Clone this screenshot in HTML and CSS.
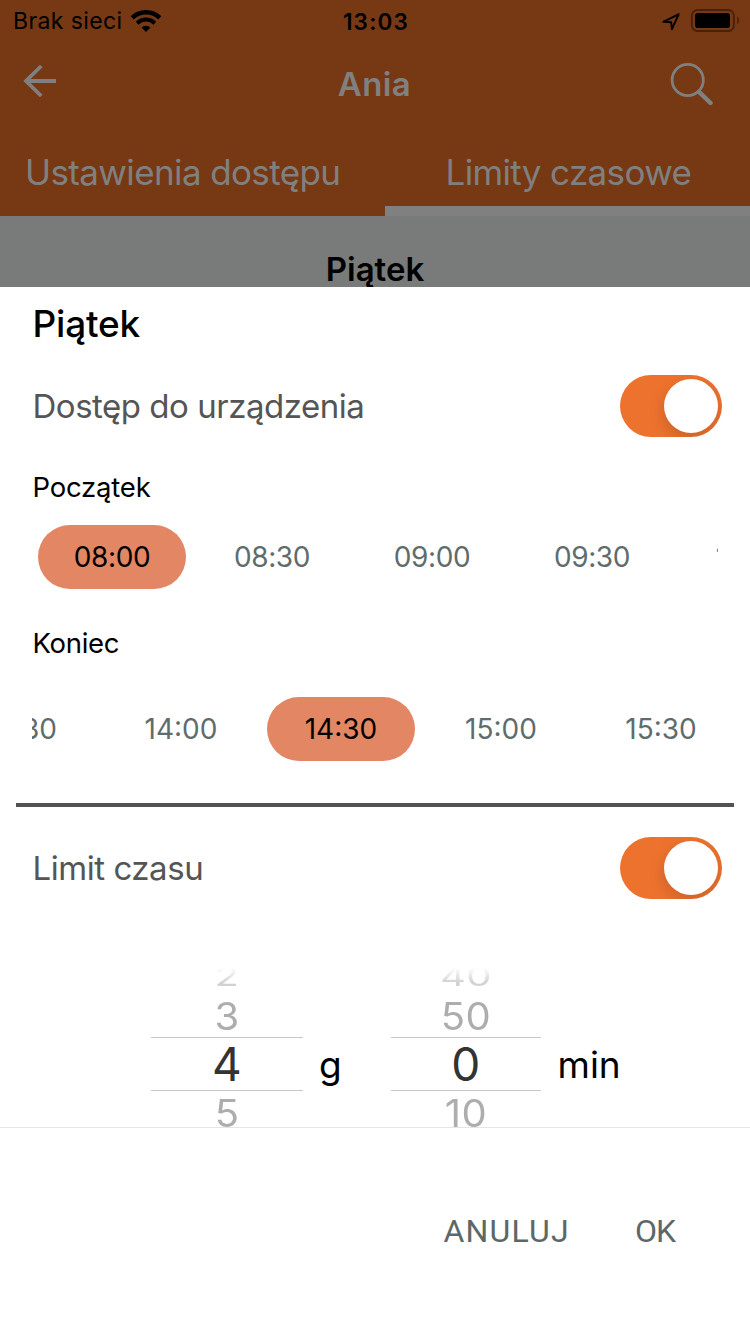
FILE: index.html
```html
<!DOCTYPE html>
<html lang="pl">
<head>
<meta charset="utf-8">
<title>Ania – Limity czasowe</title>
<link rel="stylesheet" href="styles.css">
</head>
<body>
<div class="screen">
  <header class="header">
    <div class="status">
      <div class="carrier"><span>Brak sieci</span>
        <svg class="wifi" width="32" height="24" viewBox="0 0 32 24"><g fill="none" stroke="#000"><path d="M2.2 8.9A19.7 19.7 0 0 1 29.8 8.9" stroke-width="4.6"/><path d="M7.2 14.2A12.6 12.6 0 0 1 24.8 14.2" stroke-width="4"/></g><path d="M16 23L11.6 18.6A6.3 6.3 0 0 1 20.4 18.6Z"/></svg>
      </div>
      <div class="clock">13:03</div>
      <div class="indicators">
        <svg width="80" height="41" viewBox="0 0 80 41"><path d="M3.4 20.8L18.8 13.2L11.9 28.2L11.2 21.2Z" fill="none" stroke="#000" stroke-width="1.9" stroke-linejoin="round"/><rect x="31.9" y="9" width="42" height="21" rx="5.6" fill="none" stroke="#47210c" stroke-width="1.9"/><rect x="35" y="12" width="35" height="15" rx="2.8"/><path d="M77.2 15.6Q79 16.4 79 19.4T77.2 23.2Z" fill="#47210c"/></svg>
      </div>
    </div>
    <div class="nav">
      <svg class="back" width="34" height="34" viewBox="0 0 34 34"><path d="M33 17H3M18.3 2L3 17L18.3 32" fill="none" stroke="#808080" stroke-width="3.8"/></svg>
      <h1 class="name">Ania</h1>
      <svg class="search" width="44" height="44" viewBox="0 0 44 44"><circle cx="17.7" cy="18" r="15.6" fill="none" stroke="#808080" stroke-width="2.8"/><path d="M29 29.8L40.5 41" stroke="#808080" stroke-width="4.4" stroke-linecap="round"/></svg>
    </div>
    <nav class="tabs">
      <div class="tab">Ustawienia dostępu</div>
      <div class="tab active">Limity czasowe</div>
    </nav>
  </header>
  <div class="backdrop"><h2 class="day">Piątek</h2></div>
  <main class="dialog">
    <h2 class="title">Piątek</h2>
    <div class="row"><span>Dostęp do urządzenia</span><span class="toggle"><i class="knob"></i></span></div>
    <h3 class="label">Początek</h3>
    <div class="times start">
      <span class="time selected">08:00</span><span class="time">08:30</span><span class="time">09:00</span><span class="time">09:30</span><span class="time one">10:00</span>
    </div>
    <h3 class="label end-label">Koniec</h3>
    <div class="times end">
      <span class="time one">13:30</span><span class="time one">14:00</span><span class="time one selected">14:30</span><span class="time one">15:00</span><span class="time one">15:30</span>
    </div>
    <hr class="rule">
    <div class="row limit"><span>Limit czasu</span><span class="toggle"><i class="knob"></i></span></div>
    <div class="picker">
      <div class="wheel hours"><div class="far">2</div><div class="near">3</div><div class="current">4</div><div class="near">5</div></div>
      <span class="unit">g</span>
      <div class="wheel minutes"><div class="far">40</div><div class="near">50</div><div class="current">0</div><div class="near">10</div></div>
      <span class="unit">min</span>
    </div>
    <footer class="actions"><span class="action">ANULUJ</span><span class="action ok">OK</span></footer>
  </main>
</div>
</body>
</html>
```
FILE: styles.css
```css
* { box-sizing: border-box; }
body { margin: 0; font-family: Inter, "Liberation Sans", sans-serif; background: #fff; }
h1, h2, h3 { margin: 0; }
.screen { width: 750px; height: 1334px; overflow: hidden; display: flex; flex-direction: column; }

.header { height: 216px; background: #773814; color: #808080; flex: none; }
.status { height: 41px; display: grid; grid-template-columns: 1fr auto 1fr; align-items: center; color: #000; line-height: 41px; }
.carrier { display: flex; align-items: center; padding-left: 13px; font-size: 23px; letter-spacing: .4px; line-height: 43px; }
.wifi { margin: -2px 0 0 7px; }
.clock { font-size: 22.5px; font-weight: 600; letter-spacing: 1.2px; padding-left: 2px; }
.indicators { display: flex; justify-content: flex-end; padding-right: 10px; }
.nav { height: 87px; display: grid; grid-template-columns: 1fr auto 1fr; align-items: center; padding: 0 36px 0 23px; }
.back { margin-top: -7px; }
.name { font-size: 33px; font-weight: 600; letter-spacing: .39px; line-height: 87px; margin-left: 12px; }
.search { justify-self: end; margin-top: -2px; }
.tabs { height: 88px; display: flex; font-size: 35px; line-height: 89px; }
.tab { width: 385px; padding-left: 25px; letter-spacing: -.62px; white-space: nowrap; }
.tab.active { width: 365px; padding-left: 60.5px; letter-spacing: -.64px; border-bottom: 10px solid #808080; }

.backdrop { height: 71px; flex: none; background: #797b7a; text-align: center; overflow: hidden; }
.day { font-size: 33px; font-weight: 600; line-height: 106px; }

.dialog { flex: 1; background: #fff; color: #000; }
.title { height: 74px; line-height: 74px; padding-left: 32.5px; font-size: 37px; font-weight: 500; letter-spacing: -.2px; }
.row { height: 90px; display: flex; align-items: center; justify-content: space-between; padding: 0 28px 0 32.5px; font-size: 33px; letter-spacing: -.48px; color: #555; }
.row.limit { height: 122px; letter-spacing: -.45px; }
.toggle { width: 102px; height: 62px; border-radius: 31px; background: #ed722e; display: flex; justify-content: flex-end; padding: 4px; overflow: hidden; }
.knob { width: 54px; height: 54px; border-radius: 50%; background: #fff; box-shadow: 0 6px 16px rgba(0, 0, 0, .15); }
.label { height: 72px; line-height: 72px; padding-left: 32.5px; font-size: 27.5px; font-weight: 400; letter-spacing: -.2px; }
.end-label { height: 104px; line-height: 104px; letter-spacing: -.3px; }
.times { height: 68px; margin: 0 32px; display: flex; align-items: center; gap: 12px; overflow: hidden; }
.times.start { padding-left: 6px; }
.times.end .time:first-child { margin-left: -85px; }
.time { flex: none; width: 148px; height: 64px; border-radius: 32px; line-height: 65px; text-align: center; font-size: 28px; letter-spacing: -.4px; color: #5f6c6c; }
.time.one { letter-spacing: 0; }
.time.selected { background: #e28663; color: #000; }
.rule { margin: 40px 16px 0; height: 4px; border: 0; background: #525452; }

.picker { height: 199px; border-bottom: 1px solid #e5e5e5; padding: 28px 0 0 151px; display: flex; overflow: hidden; }
.wheel { text-align: center; color: #adadad; font-size: 40px; letter-spacing: .4px; }
.hours { width: 152px; }
.minutes { width: 150px; margin-left: auto; }
.unit { width: 88px; padding-left: 16px; font-size: 37px; line-height: 55px; margin-top: 80px; flex: none; }
.unit:last-child { width: 209px; padding-left: 16.5px; }
.far { height: 37px; line-height: 39px; transform: scaleY(.68); -webkit-mask-image: linear-gradient(transparent 20%, rgba(0, 0, 0, .55) 78%); mask-image: linear-gradient(transparent 20%, rgba(0, 0, 0, .55) 78%); }
.near { height: 43px; line-height: 45px; transform: scaleY(.95); }
.current { height: 54px; line-height: 53px; border: solid #c8c8c8; border-width: 1px 0; font-size: 46px; color: #333; }

.actions { height: 206px; display: flex; align-items: center; justify-content: flex-end; padding-right: 75px; font-family: Roboto, "Liberation Sans", sans-serif; font-size: 32px; letter-spacing: 1.2px; color: #5c6867; }
.ok { margin-left: 65px; letter-spacing: -1px; }
```
